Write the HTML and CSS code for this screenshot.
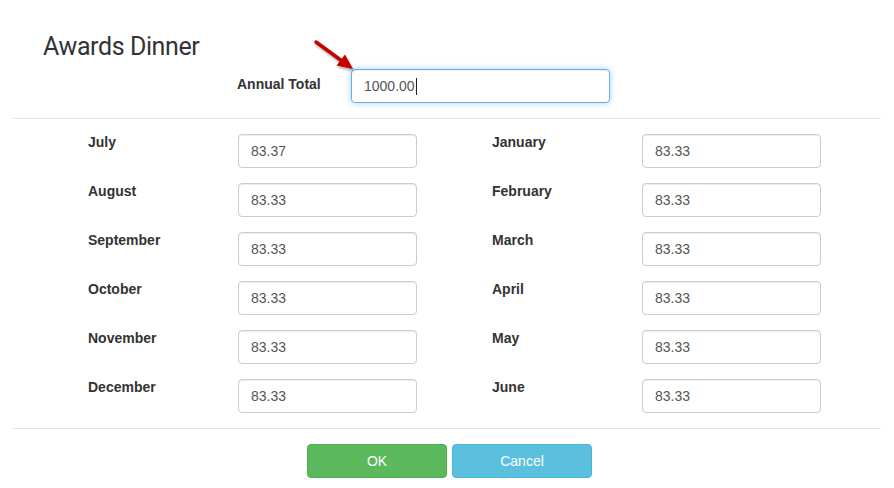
FILE: index.html
```html
<!DOCTYPE html>
<html lang="en">
<head>
<meta charset="utf-8">
<title>Awards Dinner</title>
<link rel="stylesheet" href="styles.css">
</head>
<body>
<div class="modal">
  <div class="modal-header">
    <h4 class="modal-title">Awards Dinner</h4>
    <div class="total-row">
      <label class="total-label">Annual Total</label>
      <div class="total-input">1000.00<span class="caret"></span></div>
    </div>
  </div>
  <div class="modal-body">
    <div class="month-col">
      <label class="month-label">July</label><input class="field" type="text" value="83.37">
      <label class="month-label">August</label><input class="field" type="text" value="83.33">
      <label class="month-label">September</label><input class="field" type="text" value="83.33">
      <label class="month-label">October</label><input class="field" type="text" value="83.33">
      <label class="month-label">November</label><input class="field" type="text" value="83.33">
      <label class="month-label">December</label><input class="field" type="text" value="83.33">
    </div>
    <div class="month-col">
      <label class="month-label">January</label><input class="field" type="text" value="83.33">
      <label class="month-label">February</label><input class="field" type="text" value="83.33">
      <label class="month-label">March</label><input class="field" type="text" value="83.33">
      <label class="month-label">April</label><input class="field" type="text" value="83.33">
      <label class="month-label">May</label><input class="field" type="text" value="83.33">
      <label class="month-label">June</label><input class="field" type="text" value="83.33">
    </div>
  </div>
  <div class="modal-footer">
    <button class="btn btn-ok" type="button">OK</button>
    <button class="btn btn-cancel" type="button">Cancel</button>
  </div>
  <svg class="arrow" width="894" height="100" viewBox="0 0 894 100" aria-hidden="true">
    <defs>
      <filter id="shadow" x="-20%" y="-20%" width="160%" height="160%">
        <feDropShadow dx="1" dy="2" stdDeviation="1.2" flood-color="#000" flood-opacity="0.35"/>
      </filter>
    </defs>
    <g filter="url(#shadow)">
      <line x1="316" y1="42" x2="342" y2="61" stroke="#c40000" stroke-width="3.5" stroke-linecap="round"/>
      <polygon points="353,69 336.5,65.5 345,54.5" fill="#c40000"/>
    </g>
  </svg>
</div>
</body>
</html>
```

FILE: styles.css
```css
html, body {
  margin: 0;
  padding: 0;
  background: #fff;
}

body {
  font-family: "Liberation Sans", Arial, sans-serif;
  font-size: 14px;
  line-height: 20px;
  color: #333;
}

.modal {
  position: relative;
  padding: 0 13px;
}

.modal-header {
  padding-top: 33px;
  padding-bottom: 15px;
  border-bottom: 1px solid #e5e5e5;
}

.modal-title {
  margin: 0 0 0 30px;
  font-family: Roboto, "Liberation Sans", Arial, sans-serif;
  font-size: 25px;
  font-weight: normal;
  line-height: 28px;
  letter-spacing: -0.4px;
  color: #333;
}

.total-row {
  display: flex;
  margin-top: 8px;
  padding-left: 224px;
}

.total-label {
  width: 114px;
  padding-top: 5px;
  font-weight: bold;
  line-height: 20px;
}

.total-input {
  box-sizing: border-box;
  width: 259px;
  height: 34px;
  padding: 6px 12px;
  border: 1px solid #66afe9;
  border-radius: 4px;
  box-shadow: inset 0 1px 1px rgba(0, 0, 0, .075), 0 0 6px rgba(102, 175, 233, .6);
  color: #555;
  line-height: 20px;
}

.caret {
  display: inline-block;
  width: 1px;
  height: 17px;
  margin-left: 1px;
  background: #222;
  vertical-align: -4px;
}

.modal-body {
  display: flex;
  gap: 75px;
  padding: 15px 0 15px 75px;
  border-bottom: 1px solid #e5e5e5;
}

.month-col {
  display: grid;
  grid-template-columns: 150px 179px;
  row-gap: 15px;
}

.month-label {
  font-weight: bold;
  line-height: 17px;
}

.field {
  box-sizing: border-box;
  width: 179px;
  height: 34px;
  margin: 0;
  padding: 6px 12px;
  border: 1px solid #ccc;
  border-radius: 4px;
  box-shadow: inset 0 1px 1px rgba(0, 0, 0, .075);
  font-family: "Liberation Sans", Arial, sans-serif;
  font-size: 14px;
  line-height: 20px;
  color: #555;
  background: #fff;
  outline: none;
}

.modal-footer {
  display: flex;
  justify-content: center;
  gap: 5px;
  padding: 15px 0 15px 5px;
}

.btn {
  box-sizing: border-box;
  width: 140px;
  height: 34px;
  padding: 6px 12px;
  border: 1px solid transparent;
  border-radius: 4px;
  font-family: "Liberation Sans", Arial, sans-serif;
  font-size: 14px;
  line-height: 20px;
  color: #fff;
  cursor: pointer;
}

.btn-ok {
  background: #5cb85c;
  border-color: #4cae4c;
}

.btn-cancel {
  background: #5bc0de;
  border-color: #46b8da;
}

.arrow {
  position: absolute;
  left: 0;
  top: 0;
  pointer-events: none;
}
```
